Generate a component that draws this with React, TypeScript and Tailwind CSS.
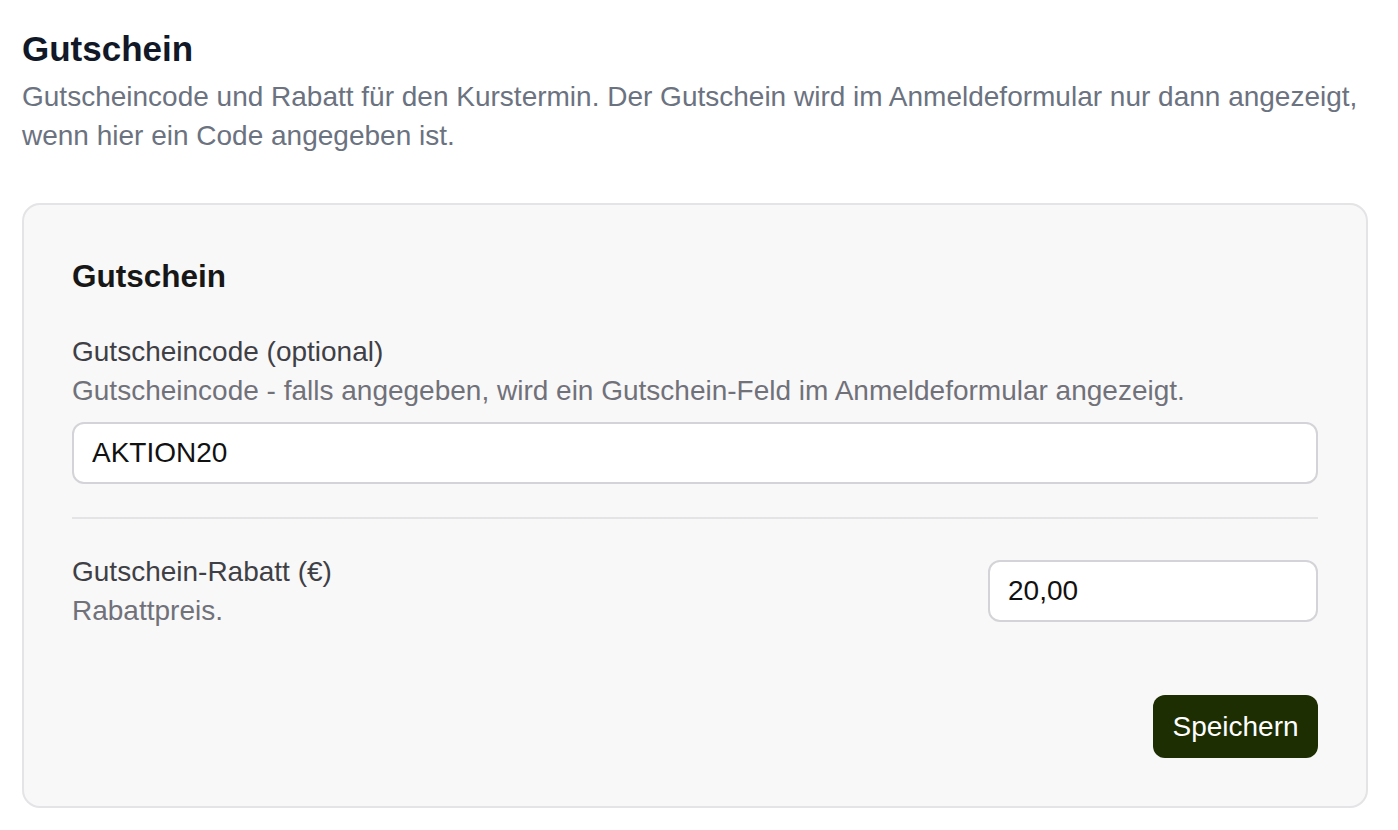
import { useState } from "react";

export default function App() {
  const [code, setCode] = useState("AKTION20");
  const [discount, setDiscount] = useState("20,00");

  return (
    <div className="min-h-screen bg-white pl-[22px] pr-[30px] pt-6 font-['Liberation_Sans',Arial,sans-serif]">
      <h1 className="text-[35px] leading-[49px] font-bold text-[#111827]">Gutschein</h1>
      <p className="mt-[4px] text-[28px] leading-[39px] text-[#6b7280]">
        Gutscheincode und Rabatt für den Kurstermin. Der Gutschein wird im Anmeldeformular nur dann angezeigt,
        wenn hier ein Code angegeben ist.
      </p>

      <div className="mt-[48px] rounded-[18px] border-2 border-[#e4e4e7] bg-[#f8f8f8] px-[48px] pt-[49px] pb-[48px]">
        <h2 className="text-[31.5px] leading-[44px] font-bold text-[#171717]">Gutschein</h2>

        {/* Gutscheincode */}
        <div className="mt-[34px]">
          <label className="block text-[28px] leading-[39px] text-[#3f3f46]">Gutscheincode (optional)</label>
          <p className="text-[28px] leading-[39px] text-[#71717a]">
            Gutscheincode - falls angegeben, wird ein Gutschein-Feld im Anmeldeformular angezeigt.
          </p>
          <input
            type="text"
            value={code}
            onChange={(e) => setCode(e.target.value)}
            className="mt-[12px] block h-[62px] w-full rounded-[12px] border-2 border-[#d4d4d8] bg-white px-[18px] text-[28px] text-[#111111] outline-none"
          />
        </div>

        <div className="mt-[33px] h-[2px] bg-[#e4e4e7]" />

        {/* Rabatt */}
        <div className="mt-[33px] flex items-center justify-between">
          <div>
            <label className="block text-[28px] leading-[39px] text-[#3f3f46]">Gutschein-Rabatt (€)</label>
            <p className="text-[28px] leading-[39px] text-[#71717a]">Rabattpreis.</p>
          </div>
          <input
            type="text"
            value={discount}
            onChange={(e) => setDiscount(e.target.value)}
            className="block h-[62px] w-[330px] rounded-[12px] border-2 border-[#d4d4d8] bg-white px-[18px] text-[28px] text-[#111111] outline-none"
          />
        </div>

        <div className="mt-[65px] flex justify-end">
          <button
            type="button"
            className="h-[63px] w-[165px] rounded-[12px] bg-[#1c2e02] text-[28px] text-white"
          >
            Speichern
          </button>
        </div>
      </div>
    </div>
  );
}
